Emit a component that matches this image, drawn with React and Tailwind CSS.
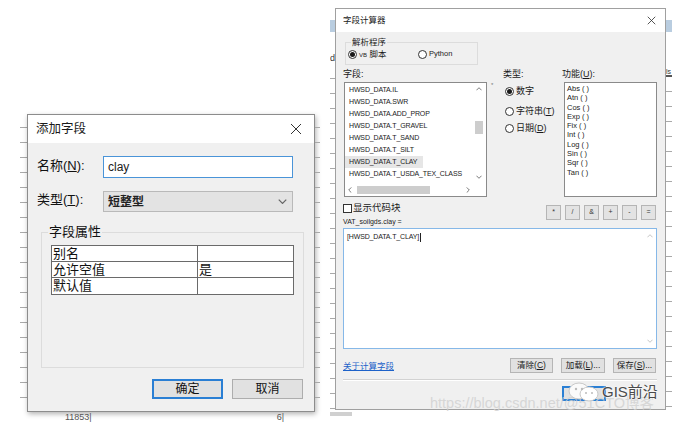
import React from "react";

const tickStrip =
  "bg-[image:repeating-linear-gradient(to_bottom,transparent_0px,transparent_14px,#a9a9a9_14px,#a9a9a9_15px)]";

function XIcon({ s = 12, w = 1 }) {
  return (
    <svg width={s} height={s} viewBox="0 0 12 12" className="shrink-0">
      <path d="M1 1 L11 11 M11 1 L1 11" stroke="#333" strokeWidth={w} fill="none" />
    </svg>
  );
}

function Chev({ dir = "down", w = 7, h = 4, color = "#555" }) {
  const d =
    dir === "down"
      ? "M0.5 0.5 L3.5 3.5 L6.5 0.5"
      : dir === "up"
      ? "M0.5 3.5 L3.5 0.5 L6.5 3.5"
      : dir === "left"
      ? "M3.5 0.5 L0.5 3.5 L3.5 6.5"
      : "M0.5 0.5 L3.5 3.5 L0.5 6.5";
  const vb = dir === "left" || dir === "right" ? "0 0 4 7" : "0 0 7 4";
  return (
    <svg width={w} height={h} viewBox={vb} className="shrink-0">
      <path d={d} stroke={color} strokeWidth="1" fill="none" />
    </svg>
  );
}

function Radio({ checked }) {
  return (
    <span className="w-[9px] h-[9px] rounded-full border border-[#333] bg-white flex items-center justify-center shrink-0">
      {checked && <span className="w-[5px] h-[5px] rounded-full bg-[#1a1a1a]" />}
    </span>
  );
}

function LeftDialog() {
  const rows = [
    ["别名", ""],
    ["允许空值", "是"],
    ["默认值", ""],
  ];
  return (
    <div className="w-[288px] h-[298px] mt-[1px] flex flex-col bg-[#f0f0f0] border border-[#8c8c8c] shadow-[1px_2px_5px_rgba(0,0,0,0.3)] shrink-0">
      <div className="h-[28px] bg-white flex items-center justify-between pl-[8px] pr-[12px]">
        <span className="text-[12.5px] text-[#1a1a1a]">添加字段</span>
        <XIcon s={12} w={1} />
      </div>
      <div className="flex-1 flex flex-col pl-[9px] pt-[13px] text-[#111]">
        <div className="flex items-center h-[22px]">
          <span className="w-[66px] text-[13px] -mt-[3px]">
            名称(<span className="underline">N</span>):
          </span>
          <div className="w-[190px] h-[22px] border border-[#4a94d8] bg-white flex items-center pl-[4px] text-[12px] text-[#222]">
            clay
          </div>
        </div>
        <div className="flex items-center h-[21px] mt-[13px]">
          <span className="w-[66px] text-[13px] -mt-[3px]">
            类型(<span className="underline">T</span>):
          </span>
          <div className="w-[190px] h-[21px] border border-[#b9b9b9] bg-[#e3e3e3] flex items-center justify-between pl-[4px] pr-[5px]">
            <span className="text-[12px] font-bold text-[#222]">短整型</span>
            <Chev dir="down" w={9} h={5} color="#666" />
          </div>
        </div>
        <div className="relative mt-[20px] ml-[4px] w-[263px] h-[136px] border border-[#dcdcdc] pt-[12px] pl-[9px]">
          <span className="absolute left-[6px] -top-[10px] bg-[#f0f0f0] px-[1px] text-[13px] leading-[18px]">
            字段属性
          </span>
          <div className="w-[243px] grid grid-cols-[146px_1fr] border border-[#6a6a6a] bg-white text-[13px] leading-[15px]">
            {rows.map(([a, b], i) => (
              <React.Fragment key={a}>
                <div className={`h-[16px] border-r border-[#6a6a6a] pl-[1px] ${i < 2 ? "border-b" : ""}`}>{a}</div>
                <div className={`h-[16px] pl-[1px] border-[#6a6a6a] ${i < 2 ? "border-b" : ""}`}>{b}</div>
              </React.Fragment>
            ))}
          </div>
        </div>
        <div className="flex justify-end gap-[9px] pr-[11px] mt-[11px]">
          <div className="w-[71px] h-[20px] border-2 border-[#2a7fd4] bg-[#e1e1e1] flex items-center justify-center text-[12px]">
            确定
          </div>
          <div className="w-[71px] h-[20px] border border-[#adadad] bg-[#e1e1e1] flex items-center justify-center text-[12px]">
            取消
          </div>
        </div>
      </div>
    </div>
  );
}

function OpBtn({ c }) {
  return (
    <div className="w-[15px] h-[15px] border border-[#b5b5b5] bg-[#e3e3e3] flex items-center justify-center text-[7px] font-['Liberation_Sans',sans-serif] text-[#333]">
      {c}
    </div>
  );
}

function RightDialog() {
  const fields = [
    "HWSD_DATA.IL",
    "HWSD_DATA.SWR",
    "HWSD_DATA.ADD_PROP",
    "HWSD_DATA.T_GRAVEL",
    "HWSD_DATA.T_SAND",
    "HWSD_DATA.T_SILT",
    "HWSD_DATA.T_CLAY",
    "HWSD_DATA.T_USDA_TEX_CLASS",
  ];
  const funcs = ["Abs ( )", "Atn ( )", "Cos ( )", "Exp ( )", "Fix ( )", "Int ( )", "Log ( )", "Sin ( )", "Sqr ( )", "Tan ( )"];
  return (
    <div className="w-[331px] h-[402px] mt-[8px] flex flex-col bg-[#f0f0f0] border border-[#a0a0a0] shrink-0">
      <div className="h-[23px] bg-white flex items-center justify-between pl-[7px] pr-[9px]">
        <span className="text-[8.5px] text-[#1a1a1a]">字段计算器</span>
        <XIcon s={9} w={1.1} />
      </div>
      <div className="flex-1 flex flex-col pl-[7px] text-[#1a1a1a]">
        <div className="relative mt-[10px] ml-[2px] w-[133px] h-[23px] border border-[#dcdcdc] flex items-center pl-[2px] pt-[1px]">
          <span className="absolute left-[5px] -top-[7px] bg-[#f0f0f0] px-[1px] text-[8.5px] leading-[12px]">解析程序</span>
          <div className="flex items-center gap-[2px] w-[70px]">
            <Radio checked />
            <span className="text-[8.5px] leading-[10px]">
              <span className="text-[6px] font-['Liberation_Sans',sans-serif]">VB</span> 脚本
            </span>
          </div>
          <div className="flex items-center gap-[2px]">
            <Radio />
            <span className="text-[7.5px] leading-[10px] font-['Liberation_Sans',sans-serif]">Python</span>
          </div>
        </div>

        <div className="flex mt-[3px] h-[129px]">
          <div className="flex flex-col w-[144px]">
            <span className="text-[9px] leading-[13px] h-[14px]">字段:</span>
            <div className="ml-[1px] w-[143px] h-[115px] border border-[#8a8a8a] bg-white flex flex-col">
              <div className="flex flex-1">
                <div className="flex-1 flex flex-col pt-[1px] font-['Liberation_Sans',sans-serif] text-[7px] leading-[12px] text-[#222] tracking-[-0.15px]">
                  {fields.map((f) => (
                    <div key={f} className={`pl-[4px] h-[12px] ${f === "HWSD_DATA.T_CLAY" ? "bg-[#e6e6e6] w-[78px]" : ""}`}>
                      {f}
                    </div>
                  ))}
                </div>
                <div className="w-[14px] flex flex-col items-center pt-[4px] pb-[4px]">
                  <Chev dir="up" w={6} h={4} color="#666" />
                  <div className="mt-[30px] w-[8px] h-[13px] bg-[#cdcdcd]" />
                  <div className="flex-1" />
                  <Chev dir="down" w={6} h={4} color="#666" />
                </div>
              </div>
              <div className="h-[13px] flex items-center pl-[3px] pr-[16px]">
                <Chev dir="left" w={4} h={6} color="#666" />
                <div className="ml-[5px] w-[73px] h-[8px] bg-[#cdcdcd]" />
                <div className="flex-1" />
                <Chev dir="right" w={4} h={6} color="#666" />
              </div>
            </div>
          </div>
          <div className="w-[18px] pt-[13px] pl-[4px] text-[6px] text-[#777] leading-[8px]">*</div>
          <div className="flex flex-col w-[57px]">
            <span className="text-[9px] leading-[13px] h-[14px] -ml-[2px]">类型:</span>
            <div className="flex items-center gap-[2px] mt-[4px] h-[10px]">
              <Radio checked />
              <span className="text-[9px] leading-[10px]">数字</span>
            </div>
            <div className="flex items-center gap-[2px] mt-[10px] h-[10px]">
              <Radio />
              <span className="text-[9px] leading-[10px] whitespace-nowrap">
                字符串(<span className="underline">T</span>)
              </span>
            </div>
            <div className="flex items-center gap-[2px] mt-[7px] h-[10px]">
              <Radio />
              <span className="text-[9px] leading-[10px] whitespace-nowrap">
                日期(<span className="underline">D</span>)
              </span>
            </div>
          </div>
          <div className="flex flex-col w-[94px]">
            <span className="text-[9px] leading-[13px] h-[14px]">
              功能(<span className="underline">U</span>):
            </span>
            <div className="ml-[2px] w-[93px] h-[115px] border border-[#8a8a8a] bg-white pt-[1px] pl-[2px] font-['Liberation_Sans',sans-serif] text-[7.5px] leading-[9.3px] text-[#222]">
              {funcs.map((f) => (
                <div key={f} className="whitespace-pre">{f}</div>
              ))}
            </div>
          </div>
        </div>

        <div className="flex items-start h-[15px] mt-[8px] pr-[9px]">
          <div className="flex items-center gap-[1px] mt-[-3px]">
            <span className="w-[9px] h-[9px] border border-[#333] bg-white shrink-0" />
            <span className="text-[9.5px] leading-[12px]">显示代码块</span>
          </div>
          <div className="flex-1" />
          <div className="flex gap-[4px]">
            {["*", "/", "&", "+", "-", "="].map((c) => (
              <OpBtn key={c} c={c} />
            ))}
          </div>
        </div>
        <div className="text-[7px] leading-[10px] -mt-[3px] font-['Liberation_Sans',sans-serif] text-[#222]">
          VAT_soilgds.clay =
        </div>

        <div className="mt-[1px] w-[314px] h-[121px] border border-[#86b8e8] bg-white flex">
          <div className="flex-1 pl-[3px] pt-[2px] font-['Liberation_Sans',sans-serif] text-[7px] leading-[12px] text-[#222] tracking-[-0.15px]">
            [HWSD_DATA.T_CLAY]<span className="inline-block w-[1px] h-[9px] bg-[#222] align-middle ml-[1px]" />
          </div>
          <div className="w-[12px] flex flex-col items-center pt-[5px] pb-[5px]">
            <Chev dir="up" w={6} h={4} color="#bbb" />
            <div className="flex-1" />
            <Chev dir="down" w={6} h={4} color="#bbb" />
          </div>
        </div>

        <div className="flex items-center h-[15px] mt-[9px] pr-[9px]">
          <span className="text-[8.5px] text-[#1d62c9] underline leading-[10px]">关于计算字段</span>
          <div className="flex-1" />
          <div className="flex gap-[8px] text-[8.5px]">
            <div className="w-[43px] h-[15px] border border-[#b5b5b5] bg-[#e1e1e1] flex items-center justify-center">
              清除(<span className="underline">C</span>)
            </div>
            <div className="w-[44px] h-[15px] border border-[#b5b5b5] bg-[#e1e1e1] flex items-center justify-center">
              加载(<span className="underline">L</span>)...
            </div>
            <div className="w-[43px] h-[15px] border border-[#b5b5b5] bg-[#e1e1e1] flex items-center justify-center">
              保存(<span className="underline">S</span>)...
            </div>
          </div>
        </div>
        <div className="mt-[6px] w-[314px] h-[2px] border-t border-[#d2d2d2] border-b border-b-white" />
        <div className="flex mt-[5px] pl-[219px]">
          <div className="w-[44px] h-[15px] border-2 border-[#2a7fd4] bg-[#e1e1e1]" />
        </div>
      </div>
    </div>
  );
}

function WeChatIcon() {
  return (
    <svg width="32" height="20" viewBox="0 0 32 20">
      <ellipse cx="11" cy="9" rx="10" ry="8" fill="#fafafa" stroke="#c8c8c8" strokeWidth="1" />
      <ellipse cx="21" cy="12" rx="9" ry="7" fill="#ffffff" stroke="#c8c8c8" strokeWidth="1" />
      <circle cx="8" cy="7" r="1.2" fill="#bbb" />
      <circle cx="14" cy="7" r="1.2" fill="#bbb" />
      <circle cx="18" cy="11" r="1" fill="#bbb" />
      <circle cx="24" cy="11" r="1" fill="#bbb" />
    </svg>
  );
}

export default function App() {
  return (
    <div className="relative flex w-[684px] h-[422px] bg-white overflow-hidden font-['Liberation_Sans','Noto_Sans_CJK_SC',sans-serif] text-[#111]">
      <div className="flex flex-col w-[300px] h-[309px] mt-[113px] ml-[20px] shrink-0">
        <div className="flex h-[299px]">
          <div className={`w-[7px] h-full ${tickStrip}`} />
          <LeftDialog />
          <div className={`w-[5px] h-full ${tickStrip}`} />
        </div>
        <div className="flex h-[10px] text-[9px] leading-[10px] text-[#555]">
          <span className="ml-[45px]">11853|</span>
          <span className="ml-[185px]">6|</span>
        </div>
      </div>

      <div className="flex flex-col w-[354px] h-[422px] ml-[10px] shrink-0">
        <div className="flex h-[412px]">
          <div className="w-[5px] h-full flex flex-col">
            <div className="h-[20px]" />
            <div className="h-[12px] bg-[#b9cde0]" />
            <div className="h-[20px]" />
            <div className="h-[12px] text-[9px] leading-[12px] text-[#333] overflow-hidden">d</div>
            <div className={`flex-1 ${tickStrip}`} />
          </div>
          <RightDialog />
          <div className="w-[6px] h-full flex flex-col">
            <div className="h-[20px]" />
            <div className="h-[12px] bg-[#b9cde0]" />
            <div className="h-[36px]" />
            <div className="h-[9px] border-b-2 border-[#555] text-[7px] leading-[8px] text-[#333] overflow-hidden">ls</div>
            <div className={`flex-1 ${tickStrip}`} />
          </div>
        </div>
        <div className="h-[4px] w-[22px] bg-[#d0d0d0]" />
      </div>

      <div className="absolute left-[430px] top-[395px] text-[14.5px] leading-[16px] text-[#cfcfcf]/80 whitespace-nowrap">
        https://blog.csdn.net/@51CTO博客
      </div>
      <div className="absolute left-[568px] top-[382px] flex items-center">
        <WeChatIcon />
        <span className="ml-[2px] text-[15px] leading-[18px] text-[#4a4a4a] [text-shadow:0_0_2px_#fff,0_0_2px_#fff]">GIS前沿</span>
      </div>
    </div>
  );
}
